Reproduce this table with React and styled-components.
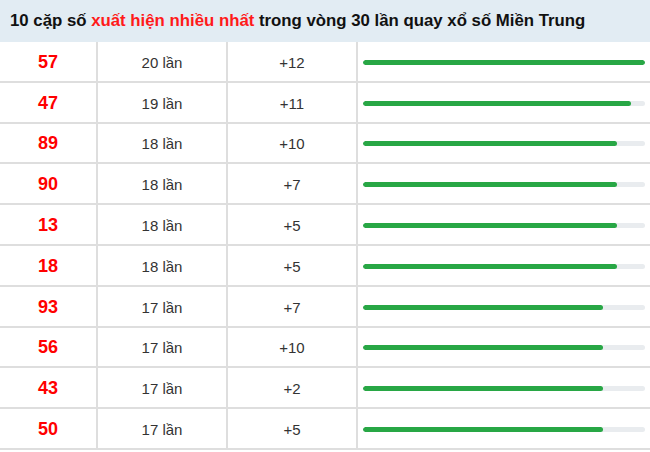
import { createGlobalStyle, styled } from 'styled-components'

const GlobalStyle = createGlobalStyle`
  html, body {
    margin: 0;
    padding: 0;
    background: #fff;
  }
  body {
    font-family: "Liberation Sans", Arial, sans-serif;
    color: #333;
  }
`

const Wrapper = styled.div`
  width: 650px;
`

const Title = styled.div`
  height: 42px;
  box-sizing: border-box;
  background: #e2ecf3;
  display: flex;
  align-items: center;
  padding: 0 0 1px 10px;
  font-size: 16.8px;
  font-weight: bold;
  color: #111;
`

const Hot = styled.span`
  color: #ff1a1a;
`

const Row = styled.div`
  display: grid;
  grid-template-columns: 96px 130px 130px 1fr;
  height: 40.8px;
  box-sizing: border-box;
  border-bottom: 2px solid #dedede;
`

const Cell = styled.div`
  display: flex;
  align-items: center;
  justify-content: center;
  border-left: ${(p) => (p.$first ? 'none' : '2px solid #dedede')};
  font-size: ${(p) => (p.$num ? '18px' : '15px')};
  font-weight: ${(p) => (p.$num ? 'bold' : 'normal')};
  color: ${(p) => (p.$num ? '#ff0000' : '#333')};
  padding-top: 2px;
`

const BarCell = styled.div`
  display: flex;
  align-items: center;
  border-left: 2px solid #dedede;
  padding: 2px 5px 0 5px;
`

const Track = styled.div`
  width: 100%;
  height: 5px;
  border-radius: 3px;
  background: #e9ecef;
  overflow: hidden;
`

const Fill = styled.div`
  height: 100%;
  background: #28a745;
  border-radius: 3px;
`

const data = [
  ['57', 20, '+12'],
  ['47', 19, '+11'],
  ['89', 18, '+10'],
  ['90', 18, '+7'],
  ['13', 18, '+5'],
  ['18', 18, '+5'],
  ['93', 17, '+7'],
  ['56', 17, '+10'],
  ['43', 17, '+2'],
  ['50', 17, '+5'],
]

const App = () => {
  const max = 20
  return (
    <Wrapper>
      <GlobalStyle />
      <Title>
        10 cặp số&nbsp;<Hot>xuất hiện nhiều nhất</Hot>&nbsp;trong vòng 30 lần quay xổ số Miền Trung
      </Title>
      {data.map(([num, count, diff]) => (
        <Row key={num}>
          <Cell $first $num>{num}</Cell>
          <Cell>{count} lần</Cell>
          <Cell>{diff}</Cell>
          <BarCell>
            <Track>
              <Fill style={{ width: `${(count / max) * 100}%` }} />
            </Track>
          </BarCell>
        </Row>
      ))}
    </Wrapper>
  )
}

export default App
